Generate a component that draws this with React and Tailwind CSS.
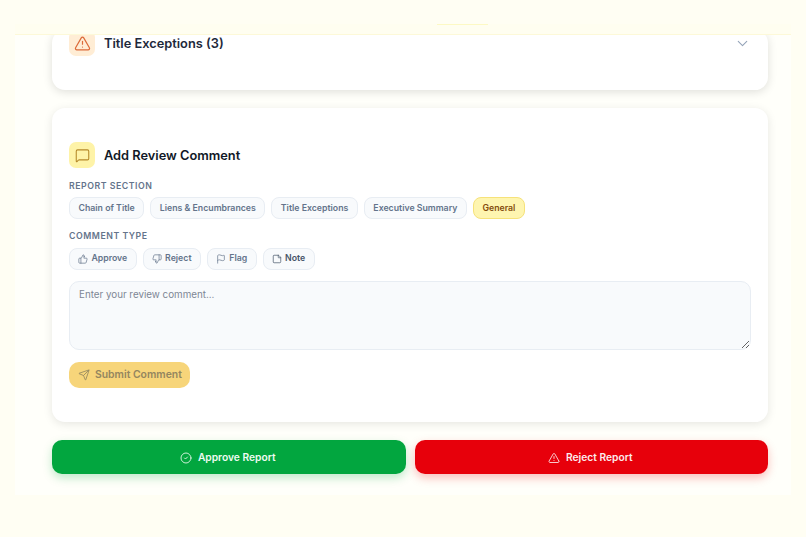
import React from "react";
import { TriangleAlert, ChevronDown, MessageSquare, ThumbsUp, ThumbsDown, Flag, StickyNote, Send, CircleCheck } from "lucide-react";

const sections = ["Chain of Title", "Liens & Encumbrances", "Title Exceptions", "Executive Summary", "General"];
const types = [
  ["Approve", ThumbsUp, "text-[#64748b]"],
  ["Reject", ThumbsDown, "text-[#64748b]"],
  ["Flag", Flag, "text-[#64748b]"],
  ["Note", StickyNote, "text-[#475569]"],
];

export default function App() {
  return (
    <div className="h-[537px] w-[806px] overflow-hidden bg-[#fffef3] px-[15px] font-['Inter',sans-serif]">
      <div className="h-[495px] w-[776px] bg-[#fffffa]">
        <div className="relative z-10 flex h-[35px] flex-col border-b border-[#fdf9d8] bg-[#fffef0]">
          <div className="h-[24px] bg-[#fffef3]"></div>
          <div className="ml-[422px] h-[1px] w-[51px] bg-[#fdf9c4]"></div>
        </div>
        <div className="pl-[37px] pr-[23px]">
          <div className="-mt-[5px] h-[60px] rounded-[13px] bg-white px-[17px] shadow-[0_2px_10px_rgba(0,0,0,0.13)]">
            <div className="flex h-[26px] items-center justify-between">
              <div className="flex items-center gap-[9px]">
                <div className="flex h-[26px] w-[26px] items-center justify-center rounded-[7px] bg-[#ffedd5]">
                  <TriangleAlert size={17} strokeWidth={1.7} className="text-[#dc6b3a]" />
                </div>
                <span className="pt-[1px] text-[12.8px] font-semibold text-[#1e293b]">Title Exceptions (3)</span>
              </div>
              <ChevronDown size={17} strokeWidth={1.5} className="text-[#94a3b8]" />
            </div>
          </div>

          <div className="mt-[18px] h-[314px] rounded-[13px] bg-white px-[17px] pt-[34px] shadow-[0_2px_10px_rgba(0,0,0,0.1)]">
            <div className="flex items-center gap-[9px]">
              <div className="flex h-[26px] w-[26px] items-center justify-center rounded-[7px] bg-[#fef3a8]">
                <MessageSquare size={15} strokeWidth={1.7} className="text-[#b5892a]" />
              </div>
              <span className="pt-[1px] text-[12.8px] font-semibold text-[#111827]">Add Review Comment</span>
            </div>

            <div className="mt-[13px] text-[8.75px] leading-[11px] font-semibold tracking-[0.06em] text-[#64748b]">REPORT SECTION</div>
            <div className="mt-[5px] flex gap-[6px]">
              {sections.map((s) => (
                <div
                  key={s}
                  className={
                    s === "General"
                      ? "flex h-[22px] items-center rounded-[8px] border border-[#f6e27a] bg-[#fef5b0] px-[8.5px] pt-[1px] text-[8.75px] font-semibold text-[#854d0e]"
                      : "flex h-[22px] items-center rounded-[8px] border border-[#e8edf3] bg-[#f8fafc] px-[8.5px] pt-[1px] text-[8.75px] font-semibold text-[#64748b]"
                  }
                >
                  {s}
                </div>
              ))}
            </div>

            <div className="mt-[12px] text-[8.75px] leading-[11px] font-semibold tracking-[0.06em] text-[#64748b]">COMMENT TYPE</div>
            <div className="mt-[6px] flex gap-[6px]">
              {types.map(([t, Icon, color]) => (
                <div key={t} className={`flex h-[22px] items-center gap-[3px] rounded-[8px] border border-[#e8edf3] bg-[#f8fafc] px-[8.4px] text-[8.75px] font-semibold ${color}`}>
                  <Icon size={10} strokeWidth={1.7} />
                  {t}
                </div>
              ))}
            </div>

            <textarea
              placeholder="Enter your review comment..."
              className="mt-[11px] block h-[69px] w-[682px] rounded-[10px] border border-[#e8edf3] bg-[#f8fafc] px-[9px] py-[6px] text-[9.8px] leading-[13px] outline-none placeholder:text-[#7d8694]"
            ></textarea>

            <div className="mt-[12px] flex h-[26px] w-[121px] items-center gap-[5px] rounded-[10px] bg-[#f7d57a] pl-[9px] text-[10.4px] font-semibold text-[#94865f]">
              <Send size={12} strokeWidth={1.7} />
              Submit Comment
            </div>
          </div>

          <div className="mt-[18px] flex gap-[9px]">
            <div className="flex h-[34px] flex-1 items-center justify-center gap-[6px] rounded-[10px] bg-[#02a63f] pt-[1px] pr-[2px] text-[10.25px] font-semibold text-[#eefbf2] shadow-[0_4px_10px_rgba(0,166,63,0.25)]">
              <CircleCheck size={12} strokeWidth={1.7} />
              Approve Report
            </div>
            <div className="flex h-[34px] flex-1 items-center justify-center gap-[6px] rounded-[10px] bg-[#e7000b] pt-[1px] pr-[2px] text-[10.25px] font-semibold text-[#fdeced] shadow-[0_4px_10px_rgba(231,0,11,0.25)]">
              <TriangleAlert size={12} strokeWidth={1.7} />
              Reject Report
            </div>
          </div>
        </div>
      </div>
    </div>
  );
}
